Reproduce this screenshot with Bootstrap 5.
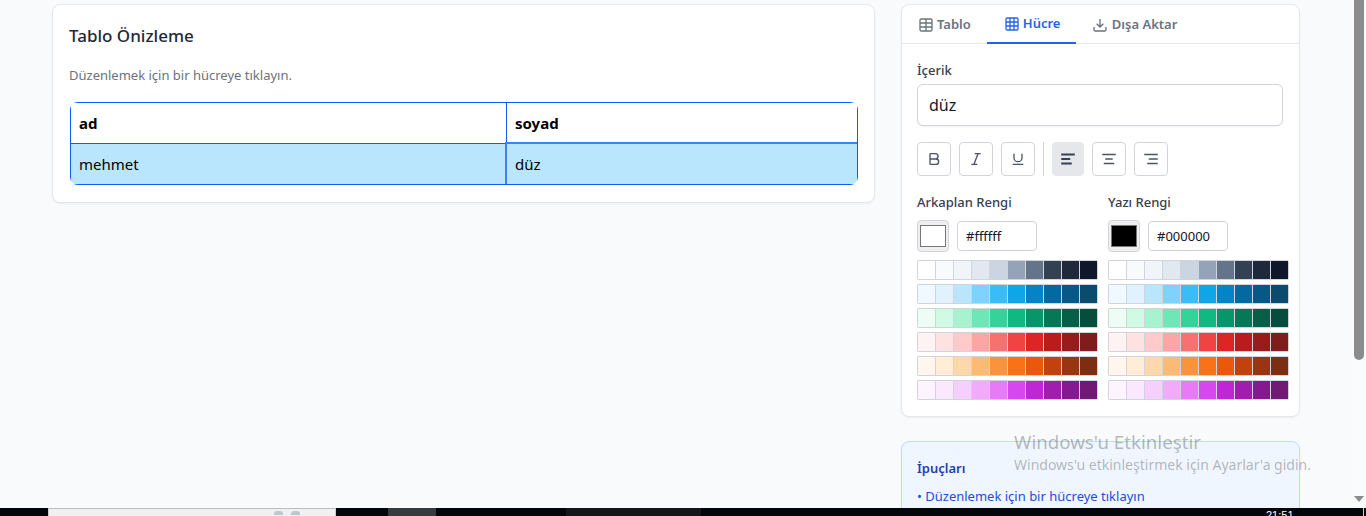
<!DOCTYPE html>
<html lang="tr">
<head>
<meta charset="utf-8">
<title>Tablo Önizleme</title>
<link href="https://cdn.jsdelivr.net/npm/bootstrap@5.3.0/dist/css/bootstrap.min.css" rel="stylesheet">
<style>
html,body{height:516px;overflow:hidden}
body{background:#f9fafb;font-family:"Noto Sans","Open Sans",sans-serif;color:#111827;position:relative}
.screen{height:516px}
.workspace{height:508px;overflow:hidden}
.page-area{width:1352px;padding:4px 0 0 52px;gap:26px}
.left-col{width:823px}
.right-col{width:399px}
.panel{border:1px solid #e5e7eb;border-radius:8px;background:#fff;box-shadow:0 1px 2px rgba(0,0,0,.05)}
.preview-panel{height:199px;padding:17px 16px 17px}
.preview-title{font-size:17px;font-weight:500;line-height:28px;margin:0;color:#1f2937}
.preview-help{font-size:13px;line-height:20px;color:#6b7280;margin:15px 0 17px}
.tbl-wrap{border-radius:8px;overflow:hidden;width:788px;margin-left:1px}
.tbl{border-collapse:collapse;width:100%;table-layout:fixed;color:#000;font-size:15px}
.tbl td,.tbl th{border:1px solid #0d5cf5;padding:0 8px;vertical-align:middle}
.tbl th{font-weight:700;height:41px}
.tbl td{height:41px}
.tbl .first-col{width:436px}
.tbl tr.sel td{background:#bae6fd}
.tbl tr.sel td.active-cell{position:relative}
.tbl tr.sel td.active-cell::after{content:"";position:absolute;top:-2px;left:-2px;right:0;bottom:0;border-left:2px solid #3b82f6;border-top:2px solid #3b82f6;pointer-events:none}
.tab-bar{height:39px;border-bottom:1px solid #e5e7eb}
.tab-item{height:39px;padding:2px 16px 0;font-size:13px;font-weight:600;color:#6b7280;gap:3px;border-bottom:2px solid transparent;margin-bottom:-1px}
.tab-item svg{width:16px;height:16px;flex:none}
.tab-item.on{color:#2563eb;border-bottom-color:#2563eb;padding:1px 0 1px 17px;width:89px;gap:3px}
.tab-item.wide{padding-left:16px;gap:4px}
.panel-body{padding:16px 16px 16px 15px}
.field-label{font-size:13px;font-weight:500;color:#374151;line-height:20px;display:block;margin:0}
.value-input.form-control{height:42px;margin-top:4px;font-size:16px;padding:0 11px;border:1px solid #d1d5db;border-radius:6px;color:#111827;box-shadow:0 1px 2px rgba(0,0,0,.05);font-family:inherit}
.tool-row{margin-top:16px;height:34px}
.tool-btn{width:34px;height:34px;padding:0;border:1px solid #d1d5db;border-radius:4px;background:#fff;color:#4b5563;margin-right:8px}
.tool-btn svg{width:16px;height:16px}
.tool-btn svg.wide-glyph{width:18px;height:18px}
.tool-btn.plain{width:32px;border-color:#e5e7eb;background:#e5e7eb;color:#374151}
.tool-sep{width:1px;height:34px;background:#d1d5db;margin-right:8px}
.color-cols{margin-top:16px;gap:11px}
.color-col{width:180px}
.color-head{line-height:20px;margin-bottom:8px}
.color-row{height:32px;gap:8px}
.color-chip{width:32px;height:32px;background:#efefef;border:1px solid #d1d5db;border-radius:4px;padding:4px 2px}
.color-chip span{display:block;height:100%;border:1px solid #767676}
.hex-input.form-control{width:80px;height:30px;font-size:13px;padding:0 8px;border:1px solid #d1d5db;border-radius:4px;color:#111827;font-family:inherit}
.palette-grid{margin-top:8px;width:181px}
.palette-line{height:20px;margin-bottom:4px;padding:1px;background:#d1d5db;border-radius:2px;gap:1px;display:grid;grid-template-columns:repeat(10,1fr)}
.palette-line:last-child{margin-bottom:0}
.tips-panel{margin-top:24px;height:120px;padding:16px 15px;background:#eff6ff;border-color:#bfdbfe}
.tips-title{font-size:13px;font-weight:600;color:#1e40af;line-height:20px;margin:0 0 8px}
.tips-line{font-size:13px;color:#1d4ed8;line-height:20px;margin:0}
.scroll-side{width:14px;position:relative;background:#fafbfc}
.scroll-thumb{width:10px;height:360px;margin-left:2px;background:#8c8c8c;border-radius:0 0 5px 5px}
.scroll-arrow{position:absolute;left:2px;top:496px;width:0;height:0;border-left:5px solid transparent;border-right:5px solid transparent;border-top:6px solid #8c8c8c}
.taskbar{height:8px;background:#03070b;overflow:hidden;color:#fff}
.task-app{margin-left:48px;width:288px;background:#f0f0f0;border-top:1px solid #bdbdbd;border-left:1px solid #ccc;border-right:1px solid #ccc;height:8px;padding-left:225px;gap:8px}
.app-mark{width:9px;height:4px;background:#b9c9d4;margin-top:2px;border-radius:3px 3px 0 0}
.task-open{margin-left:52px;width:48px;background:#363b40;height:8px}
.task-art{margin-left:130px;width:135px;height:8px;background:#15161a}
.task-clock{font-size:11px;line-height:14px;margin-left:565px;width:73px;font-family:"Liberation Sans",sans-serif}
.task-edge{width:1px;height:8px;background:#d0d0d0;margin-left:24px}
.activate-note{position:absolute;left:1014px;top:430px;color:rgba(90,90,90,.42);pointer-events:none;white-space:nowrap;font-family:"Noto Sans",sans-serif}
.activate-title{font-size:18.7px;line-height:24px}
.activate-sub{font-size:14px;line-height:21px}
</style>
</head>
<body>
<svg width="0" height="0" class="position-absolute">
<defs>
<symbol id="i-table" viewBox="0 0 24 24"><rect x="3" y="3" width="18" height="18" rx="2"/><path d="M12 3v18M3 9h18M3 15h18"/></symbol>
<symbol id="i-grid" viewBox="0 0 24 24"><rect x="3" y="3" width="18" height="18" rx="2"/><path d="M3 9h18M3 15h18M9 3v18M15 3v18"/></symbol>
<symbol id="i-down" viewBox="0 0 24 24"><path d="M21 15v4a2 2 0 0 1-2 2H5a2 2 0 0 1-2-2v-4M7 10l5 5 5-5M12 15V3"/></symbol>
</defs>
</svg>
<div class="screen d-flex flex-column">
  <div class="workspace d-flex">
    <div class="page-area d-flex align-items-start">
      <div class="left-col">
        <div class="panel preview-panel">
          <h2 class="preview-title">Tablo Önizleme</h2>
          <p class="preview-help">Düzenlemek için bir hücreye tıklayın.</p>
          <div class="tbl-wrap">
            <table class="tbl">
              <tr><th class="first-col">ad</th><th>soyad</th></tr>
              <tr class="sel"><td>mehmet</td><td class="active-cell">düz</td></tr>
            </table>
          </div>
        </div>
      </div>
      <div class="right-col">
        <div class="panel">
          <div class="tab-bar d-flex">
            <div class="tab-item d-flex align-items-center"><svg fill="none" stroke="currentColor" stroke-width="2"><use href="#i-table"/></svg>Tablo</div>
            <div class="tab-item on d-flex align-items-center"><svg fill="none" stroke="currentColor" stroke-width="2"><use href="#i-grid"/></svg>Hücre</div>
            <div class="tab-item wide d-flex align-items-center"><svg fill="none" stroke="currentColor" stroke-width="2"><use href="#i-down"/></svg>Dışa Aktar</div>
          </div>
          <div class="panel-body">
            <label class="field-label" for="cellValue">İçerik</label>
            <input id="cellValue" class="form-control value-input" value="düz">
            <div class="tool-row d-flex">
              <button class="tool-btn d-flex align-items-center justify-content-center"><svg viewBox="0 0 24 24" fill="none" stroke="currentColor" stroke-width="2"><path d="M6 12h9a4 4 0 0 1 0 8H7a1 1 0 0 1-1-1V5a1 1 0 0 1 1-1h7a4 4 0 0 1 0 8"/></svg></button>
              <button class="tool-btn d-flex align-items-center justify-content-center"><svg viewBox="0 0 24 24" fill="none" stroke="currentColor" stroke-width="2"><path d="M19 4h-9M14 20H5M15 4 9 20"/></svg></button>
              <button class="tool-btn d-flex align-items-center justify-content-center"><svg viewBox="0 0 24 24" fill="none" stroke="currentColor" stroke-width="2"><path d="M6 4v6a6 6 0 0 0 12 0V4M4 20h16"/></svg></button>
              <div class="tool-sep"></div>
              <button class="tool-btn plain d-flex align-items-center justify-content-center"><svg class="wide-glyph" viewBox="0 0 24 24" fill="none" stroke="currentColor" stroke-width="2.4"><path d="M21 6H3M15 12H3M17 18H3"/></svg></button>
              <button class="tool-btn d-flex align-items-center justify-content-center"><svg class="wide-glyph" viewBox="0 0 24 24" fill="none" stroke="currentColor" stroke-width="2.2"><path d="M21 6H3M17 12H7M19 18H5"/></svg></button>
              <button class="tool-btn d-flex align-items-center justify-content-center"><svg class="wide-glyph" viewBox="0 0 24 24" fill="none" stroke="currentColor" stroke-width="2.2"><path d="M21 6H3M21 12H9M21 18H7"/></svg></button>
            </div>
            <div class="color-cols d-flex">
              <div class="color-col">
                <div class="field-label color-head">Arkaplan Rengi</div>
                <div class="color-row d-flex align-items-center">
                  <div class="color-chip"><span class="bg-white"></span></div>
                  <input class="form-control hex-input" value="#ffffff">
                </div>
                <div class="palette-grid"></div>
              </div>
              <div class="color-col">
                <div class="field-label color-head">Yazı Rengi</div>
                <div class="color-row d-flex align-items-center">
                  <div class="color-chip"><span class="bg-black"></span></div>
                  <input class="form-control hex-input" value="#000000">
                </div>
                <div class="palette-grid"></div>
              </div>
            </div>
          </div>
        </div>
        <div class="panel tips-panel">
          <h3 class="tips-title">İpuçları</h3>
          <p class="tips-line">• Düzenlemek için bir hücreye tıklayın</p>
        </div>
      </div>
    </div>
    <div class="scroll-side"><div class="scroll-thumb"></div><div class="scroll-arrow"></div></div>
  </div>
  <div class="taskbar d-flex">
    <div class="task-app d-flex"><span class="app-mark"></span><span class="app-mark"></span></div>
    <div class="task-open"></div>
    <div class="task-art"></div>
    <div class="task-clock">21:51</div>
    <div class="task-edge"></div>
  </div>
</div>
<div class="activate-note">
  <div class="activate-title">Windows'u Etkinleştir</div>
  <div class="activate-sub">Windows'u etkinleştirmek için Ayarlar'a gidin.</div>
</div>
<script>
var palette=[
"#ffffff #f8fafc #f1f5f9 #e2e8f0 #cbd5e1 #94a3b8 #64748b #334155 #1e293b #0f172a",
"#f0f9ff #e0f2fe #bae6fd #7dd3fc #38bdf8 #0ea5e9 #0284c7 #0369a1 #075985 #0c4a6e",
"#ecfdf5 #d1fae5 #a7f3d0 #6ee7b7 #34d399 #10b981 #059669 #047857 #065f46 #064e3b",
"#fef2f2 #fee2e2 #fecaca #fca5a5 #f87171 #ef4444 #dc2626 #b91c1c #991b1b #7f1d1d",
"#fff7ed #ffedd5 #fed7aa #fdba74 #fb923c #f97316 #ea580c #c2410c #9a3412 #7c2d12",
"#fdf4ff #fae8ff #f5d0fe #f0abfc #e879f9 #d946ef #c026d3 #a21caf #86198f #701a75"];
document.querySelectorAll('.palette-grid').forEach(function(g){
  palette.forEach(function(line){
    var row=document.createElement('div');row.className='palette-line';
    line.split(' ').forEach(function(c){var s=document.createElement('span');s.style.background=c;row.appendChild(s);});
    g.appendChild(row);
  });
});
</script>
</body>
</html>
